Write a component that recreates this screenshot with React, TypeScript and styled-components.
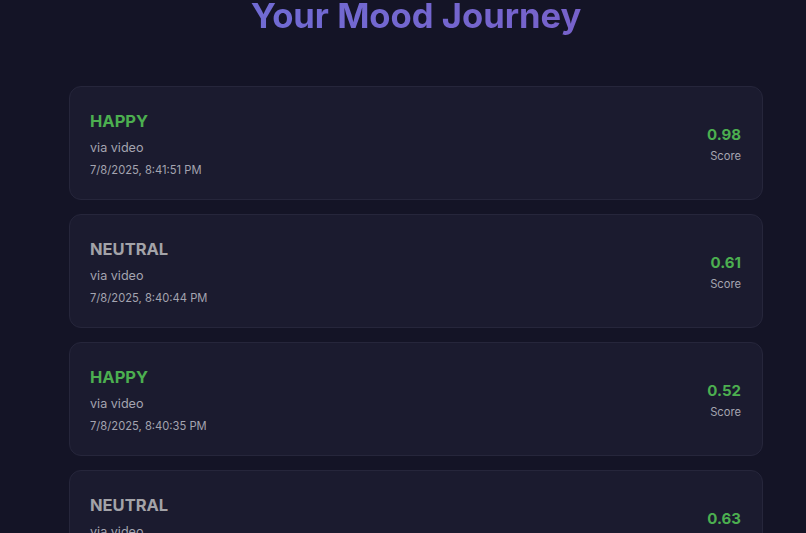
import styled, { createGlobalStyle } from 'styled-components';

type Entry = {
  mood: 'happy' | 'neutral';
  source: string;
  time: string;
  score: number;
};

const entries: Entry[] = [
  { mood: 'happy', source: 'video', time: '7/8/2025, 8:41:51 PM', score: 0.98 },
  { mood: 'neutral', source: 'video', time: '7/8/2025, 8:40:44 PM', score: 0.61 },
  { mood: 'happy', source: 'video', time: '7/8/2025, 8:40:35 PM', score: 0.52 },
  { mood: 'neutral', source: 'video', time: '7/8/2025, 8:40:21 PM', score: 0.63 },
];

const moodColors: Record<Entry['mood'], string> = {
  happy: '#4caf50',
  neutral: '#a3a3a8',
};

// --- Styled components ---
const GlobalStyle = createGlobalStyle`
  html, body {
    margin: 0;
    padding: 0;
    background: #141426;
    font-family: 'Inter', 'Noto Sans', sans-serif;
    overflow: hidden;
  }
`;

const Page = styled.div`
  min-height: 100vh;
  padding: 0 0 40px 26px;
  box-sizing: border-box;
`;

const Container = styled.main`
  max-width: 694px;
  margin: 0 auto;
`;

const Title = styled.h1`
  margin: -5px 0 49px;
  text-align: center;
  font-size: 34.6px;
  line-height: 1.2;
  font-weight: 700;
  background: linear-gradient(90deg, #6d70d8, #7a5dc6);
  -webkit-background-clip: text;
  background-clip: text;
  color: transparent;
`;

const List = styled.div`
  display: flex;
  flex-direction: column;
  gap: 14px;
`;

const Card = styled.div`
  display: flex;
  align-items: center;
  justify-content: space-between;
  padding: 23px 21px 20px 20px;
  background: #1b1b2f;
  border: 1px solid #26263b;
  border-radius: 12px;
`;

const Info = styled.div`
  display: flex;
  flex-direction: column;
`;

const Mood = styled.div<{ $color: string }>`
  font-size: 16.5px;
  line-height: 22px;
  font-weight: 700;
  color: ${(p) => p.$color};
  text-transform: uppercase;
`;

const Source = styled.div`
  margin-top: 6px;
  font-size: 12.6px;
  line-height: 20px;
  color: #a4a4b0;
`;

const Time = styled.div`
  margin-top: 3px;
  font-size: 11.2px;
  line-height: 18px;
  color: #a4a4b0;
`;

const ScoreBox = styled.div`
  display: flex;
  flex-direction: column;
  align-items: flex-end;
`;

const ScoreValue = styled.div`
  font-size: 15px;
  line-height: 22px;
  font-weight: 700;
  color: #4caf50;
`;

const ScoreLabel = styled.div`
  margin-top: 1px;
  font-size: 11.2px;
  line-height: 18px;
  color: #a4a4b0;
`;

export default function App() {
  return (
    <>
      <GlobalStyle />
      <Page>
        <Container>
          <Title>Your Mood Journey</Title>
          <List>
            {entries.map((e, i) => (
              <Card key={i}>
                <Info>
                  <Mood $color={moodColors[e.mood]}>{e.mood}</Mood>
                  <Source>via {e.source}</Source>
                  <Time>{e.time}</Time>
                </Info>
                <ScoreBox>
                  <ScoreValue>{e.score.toFixed(2)}</ScoreValue>
                  <ScoreLabel>Score</ScoreLabel>
                </ScoreBox>
              </Card>
            ))}
          </List>
        </Container>
      </Page>
    </>
  );
}
